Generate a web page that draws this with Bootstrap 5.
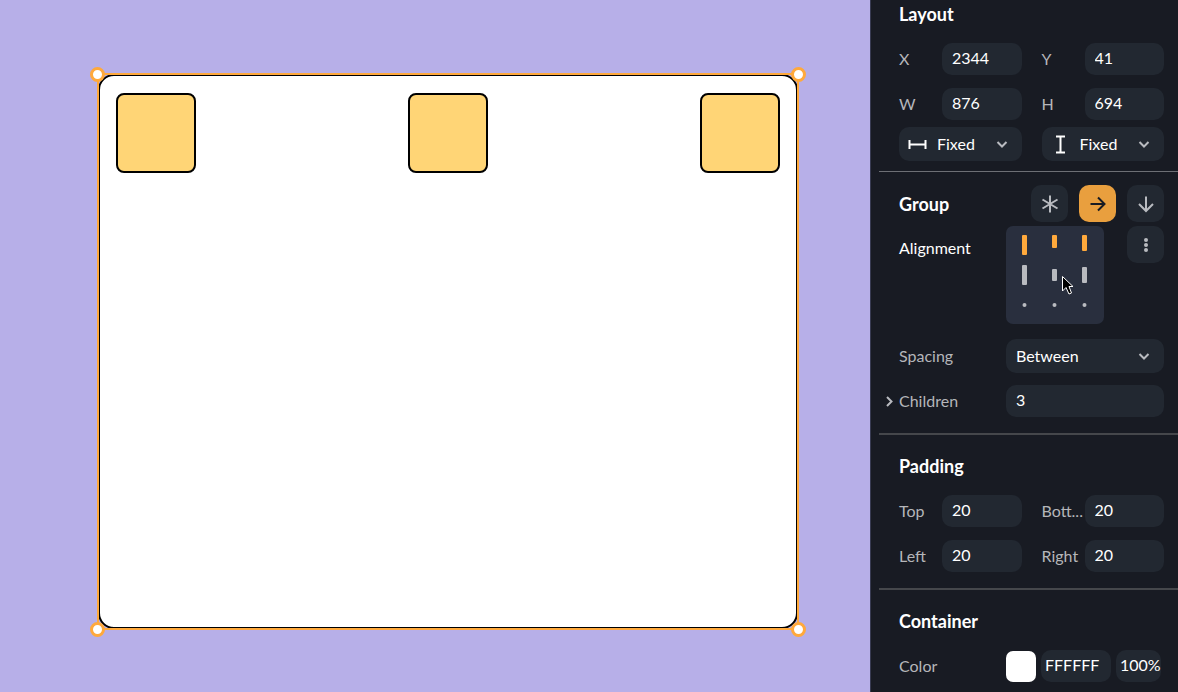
<!DOCTYPE html>
<html lang="en">
<head>
<meta charset="utf-8">
<meta name="viewport" content="width=device-width, initial-scale=1">
<title>Layout editor</title>
<link href="https://cdn.jsdelivr.net/npm/bootstrap@5.3.0/dist/css/bootstrap.min.css" rel="stylesheet">
<style>
body { font: 16px/20px Lato, sans-serif; background: #181b23; color: #fff; }
.stage { background: #b7afe8; padding: 74px 72px 63px 98px; }
.frame { background: #fff; border: 2px solid #000; border-radius: 16px; padding: 17px 16px; }
.tile { width: 80px; height: 80px; background: #ffd576; border: 2px solid #000; border-radius: 8px; }
.selection { position: absolute; inset: -3px; border: 2px solid #ffa93c; }
.handle { position: absolute; width: 15px; height: 15px; border: 3px solid #ffa93c; border-radius: 50%; background: #fff; }
.handle.tl { left: -9px; top: -8px; }
.handle.tr { right: -9px; top: -8px; }
.handle.bl { left: -9px; bottom: -9px; }
.handle.br { right: -9px; bottom: -9px; }
.inspector { width: 308px; background: #181b23; border-left: 1px solid #383b52; padding-left: 8px; }
.section { padding: 21px 14px 16px 20px; }
.section + .section { border-top: 2px solid #45474b; }
.section.layout-section { padding-top: 4px; padding-bottom: 10px; }
.section.group-section { border-top: 1px solid #6d6f75; padding-top: 13px; }
h2 { font-size: 18px; line-height: 20px; font-weight: 700; margin: 0 0 19px; }
.pair { display: grid; grid-template-columns: 1fr 1fr; column-gap: 20px; }
.pair + .pair { margin-top: 13px; }
.pair + .pair.modes { margin-top: 7px; }
.cell { display: grid; grid-template-columns: 43px 1fr; align-items: center; }
.wide { display: grid; grid-template-columns: 107px 1fr; align-items: center; }
.name { color: #b5b6ba; white-space: nowrap; }
.box { width: 100%; min-width: 0; height: 32px; background: #222831; color: #fff; border: 0; border-radius: 10px; padding: 0 10px 4px; outline: 0; }
.drop { position: relative; }
.drop select { display: block; appearance: none; height: 34px; padding-bottom: 0; }
.drop.with-icon select { padding-left: 38px; }
.drop svg { position: absolute; pointer-events: none; }
.drop .lead-icon { left: 8px; top: 7px; }
.drop .caret { right: 13px; top: 11px; }
.tools { gap: 11px; }
.tool { width: 37px; height: 37px; border: 0; border-radius: 10px; background: #222831; color: #b9bbc0; padding: 0; display: grid; place-items: center; }
.tool.on { background: #e99f3e; color: #181b23; }
.align-row { margin-bottom: 15px; }
.align-pad { width: 98px; height: 98px; background: #292f3e; border: 0; border-radius: 7px; padding: 0; position: relative; }
.pointer { position: absolute; left: 55px; top: 49px; }
.children-row { margin-top: 12px; }
.paint { gap: 5px; }
.swatch { width: 30px; height: 31px; border: 0; border-radius: 7px; background: #fff; padding: 0; }
.paint .box { padding-left: 4px; padding-right: 0; }
.paint .hex { width: 70px; }
.paint .alpha { width: 45px; }
</style>
</head>
<body>
<div class="d-flex min-vh-100">
  <main class="stage flex-fill d-flex">
    <div class="frame flex-fill position-relative d-flex justify-content-between align-items-start">
      <div class="tile"></div><div class="tile"></div><div class="tile"></div>
      <div class="selection">
        <span class="handle tl"></span><span class="handle tr"></span>
        <span class="handle bl"></span><span class="handle br"></span>
      </div>
    </div>
  </main>

  <aside class="inspector flex-shrink-0">
    <section class="section layout-section">
      <h2>Layout</h2>
      <div class="pair">
        <div class="cell"><label class="name" for="x">X</label><input class="box" id="x" value="2344"></div>
        <div class="cell"><label class="name" for="y">Y</label><input class="box" id="y" value="41"></div>
      </div>
      <div class="pair">
        <div class="cell"><label class="name" for="w">W</label><input class="box" id="w" value="876"></div>
        <div class="cell"><label class="name" for="h">H</label><input class="box" id="h" value="694"></div>
      </div>
      <div class="pair modes">
        <div class="drop with-icon">
          <select class="box" aria-label="Width mode"><option>Fixed</option></select>
          <svg class="lead-icon" width="20" height="20" fill="none" stroke="#fff" stroke-width="2"><path d="M2 10.500H19M2.500 6V15M18.500 6V15"/></svg>
          <svg class="caret" width="14" height="14" fill="none" stroke="#b9bbc0" stroke-width="2"><path d="M2.500 4L7 8.500L11.500 4"/></svg>
        </div>
        <div class="drop with-icon">
          <select class="box" aria-label="Height mode"><option>Fixed</option></select>
          <svg class="lead-icon" width="20" height="20" fill="none" stroke="#fff" stroke-width="2"><path d="M10.500 2V19M6 2.500H15M6 18.500H15"/></svg>
          <svg class="caret" width="14" height="14" fill="none" stroke="#b9bbc0" stroke-width="2"><path d="M2.500 4L7 8.500L11.500 4"/></svg>
        </div>
      </div>
    </section>

    <section class="section group-section">
      <div class="d-flex align-items-center mb-1">
        <h2 class="me-auto mb-0">Group</h2>
        <div class="d-flex tools">
          <button class="tool" aria-label="Free"><svg width="20" height="20" fill="none" stroke="currentColor" stroke-width="2"><path d="M10 1.500V18.500M2.500 5.500L17.500 14.500M2.500 14.500L17.500 5.500"/></svg></button>
          <button class="tool on" aria-label="Horizontal"><svg width="20" height="20" fill="none" stroke="currentColor" stroke-width="2"><path d="M2.500 10H16.500M10 3.500L16.500 10L10 16.500"/></svg></button>
          <button class="tool" aria-label="Vertical"><svg width="20" height="20" fill="none" stroke="currentColor" stroke-width="2"><path d="M10 2.500V16.500M3 10L10 17L17 10"/></svg></button>
        </div>
      </div>
      <div class="wide align-items-start align-row">
        <span class="pt-2 mt-1">Alignment</span>
        <div class="d-flex justify-content-between align-items-start">
          <button class="align-pad" aria-label="Align top, space between">
            <svg class="d-block" width="98" height="98">
              <g fill="#ffa93c"><rect x="16" y="9" width="5" height="20" rx="1"/><rect x="46" y="9" width="5" height="13" rx="1"/><rect x="76" y="9" width="5" height="16" rx="1"/></g>
              <g fill="#b9bbc0"><rect x="16" y="39" width="5" height="20" rx="1"/><rect x="46" y="43" width="5" height="12" rx="1"/><rect x="76" y="41" width="5" height="16" rx="1"/>
              <circle cx="18.500" cy="79" r="2"/><circle cx="48.500" cy="79" r="2"/><circle cx="78.500" cy="79" r="2"/></g>
            </svg>
            <svg class="pointer" width="14" height="21"><path d="M1.500 1.500V16L5 12.500L8 19L10.500 18L8 11.500H12Z" fill="#000" stroke="#fff"/></svg>
          </button>
          <button class="tool" aria-label="More alignment options"><svg width="20" height="20" fill="currentColor"><circle cx="10" cy="5" r="2"/><circle cx="10" cy="10" r="2"/><circle cx="10" cy="15" r="2"/></svg></button>
        </div>
      </div>
      <div class="wide">
        <label class="name" for="spacing">Spacing</label>
        <div class="drop">
          <select class="box" id="spacing"><option>Between</option></select>
          <svg class="caret" width="14" height="14" fill="none" stroke="#b9bbc0" stroke-width="2"><path d="M2.500 4L7 8.500L11.500 4"/></svg>
        </div>
      </div>
      <div class="wide children-row">
        <label class="name position-relative" for="children"><svg class="position-absolute end-100 top-0 mt-1" width="14" height="14" fill="none" stroke="#b9bbc0" stroke-width="2"><path d="M2 2L6.500 6.500L2 11"/></svg>Children</label>
        <input class="box" id="children" value="3">
      </div>
    </section>

    <section class="section">
      <h2>Padding</h2>
      <div class="pair">
        <div class="cell"><label class="name" for="pt">Top</label><input class="box" id="pt" value="20"></div>
        <div class="cell"><label class="name" for="pb">Bott...</label><input class="box" id="pb" value="20"></div>
      </div>
      <div class="pair">
        <div class="cell"><label class="name" for="pl">Left</label><input class="box" id="pl" value="20"></div>
        <div class="cell"><label class="name" for="pr">Right</label><input class="box" id="pr" value="20"></div>
      </div>
    </section>

    <section class="section pb-0">
      <h2>Container</h2>
      <div class="wide">
        <label class="name" for="hex">Color</label>
        <div class="d-flex align-items-center paint">
          <button class="swatch flex-shrink-0" aria-label="Pick color"></button>
          <input class="box hex" id="hex" value="FFFFFF">
          <input class="box alpha" aria-label="Opacity" value="100%">
        </div>
      </div>
    </section>
  </aside>
</div>
<script src="https://cdn.jsdelivr.net/npm/bootstrap@5.3.0/dist/js/bootstrap.bundle.min.js"></script>
</body>
</html>
